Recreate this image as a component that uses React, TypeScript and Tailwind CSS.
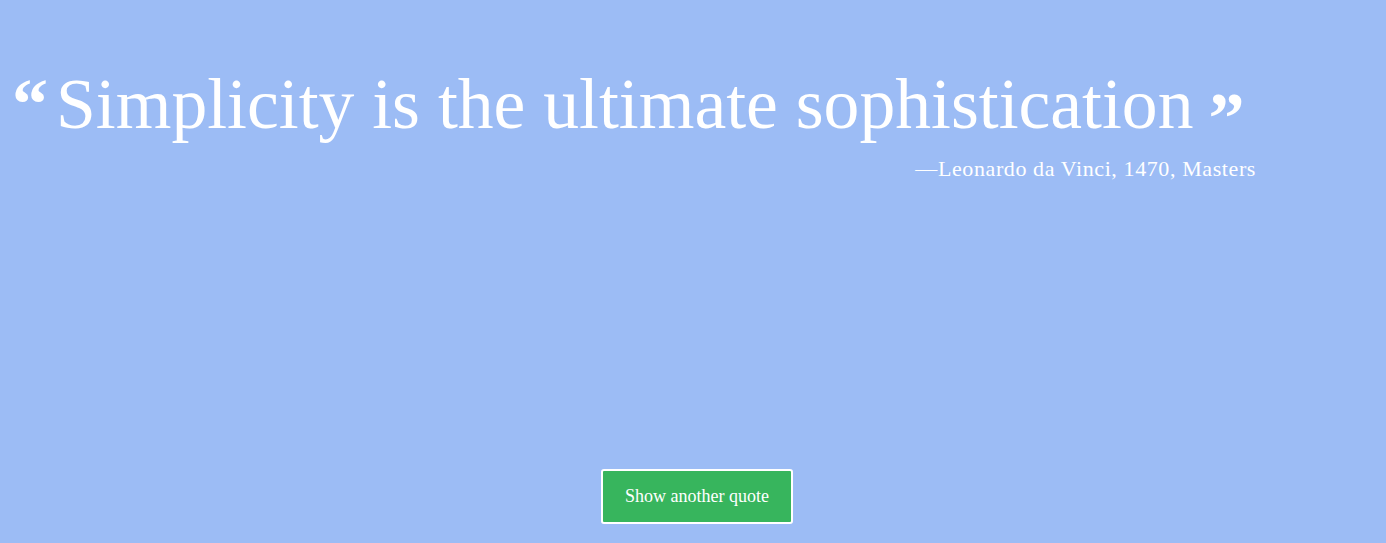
export default function App() {
  return (
    <div className="flex h-[543px] w-full flex-col bg-[#9cbcf5] text-white" style={{ fontFamily: '"Liberation Serif", "DejaVu Serif", serif' }}>
      <div className="w-[1256px] pt-[62px] pl-[12px]">
        <div className="flex items-start">
          <span className="mt-[22px] mr-[8px] text-[72px] font-bold leading-[40px]">“</span>
          <h1 className="text-[71.6px] leading-[84px]">Simplicity is the ultimate sophistication</h1>
          <span className="mt-[36px] ml-[15px] text-[72px] font-bold leading-[40px]">”</span>
        </div>
        <p className="mt-[6px] text-right text-[22px] tracking-[0.6px]">—Leonardo da Vinci, 1470, Masters</p>
      </div>
      <div className="mt-auto mb-[19px] flex justify-center pl-[8px]">
        <button className="h-[55px] w-[192px] rounded-[3px] border-2 border-white bg-[#37b55d] text-[18px] text-white">
          Show another quote
        </button>
      </div>
    </div>
  );
}
